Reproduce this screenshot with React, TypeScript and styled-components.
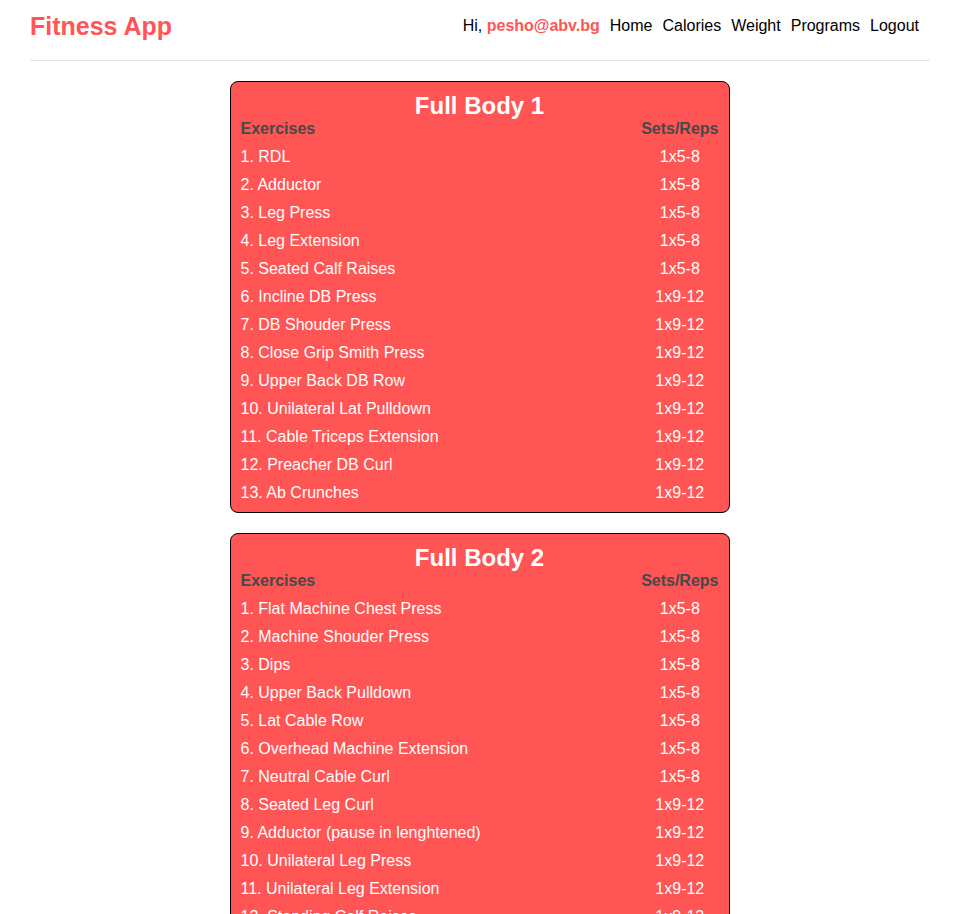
import React from "react";
import styled, { createGlobalStyle } from "styled-components";

const Global = createGlobalStyle`
  html, body { margin: 0; padding: 0; background: #fff; }
  body { font-family: "Liberation Sans", Arial, sans-serif; font-size: 16px; color: #000; }
  * { box-sizing: border-box; }
`;

const Header = styled.header`
  margin: 0 29px 0 30px;
  padding-bottom: 10px;
  border-bottom: 1px solid #e3e3e3;
`;

const HeaderRow = styled.div`
  height: 50px;
  display: flex;
  align-items: center;
  justify-content: space-between;
`;

const Brand = styled.a`
  color: #ff5555;
  font-weight: bold;
  font-size: 25px;
  text-decoration: none;
  padding-top: 2px;
`;

const Nav = styled.nav`
  display: flex;
  align-items: center;
  padding-right: 6px;
  padding-top: 2px;
`;

const NavItem = styled.a`
  color: #000;
  text-decoration: none;
  padding: 0 5px;
  font-size: 16px;
`;

const User = styled.span`
  color: #ff5555;
  font-weight: bold;
`;

const Main = styled.main`
  display: flex;
  flex-direction: column;
  align-items: center;
  gap: 20px;
  padding-top: 20px;
`;

const Card = styled.section`
  width: 500px;
  background: #ff5555;
  border: 1px solid #000;
  border-radius: 8px;
  padding: 12px 10px 5px 10px;
`;

const Title = styled.h2`
  margin: 0;
  text-align: center;
  color: #fff;
  font-size: 24px;
  line-height: 24px;
  font-weight: bold;
`;

const Table = styled.div`
  display: grid;
  grid-template-columns: 1fr auto;
  margin-top: 1px;
`;

const HeadCell = styled.div<{ $right?: boolean }>`
  color: #444a4a;
  font-weight: bold;
  font-size: 16px;
  line-height: 20px;
  padding-bottom: 4px;
  text-align: ${(p) => (p.$right ? "center" : "left")};
`;

const Cell = styled.div<{ $right?: boolean }>`
  color: #fff;
  font-size: 16px;
  height: 28px;
  line-height: 28px;
  text-align: ${(p) => (p.$right ? "center" : "left")};
`;

type Program = { title: string; items: [string, string][] };

const programs: Program[] = [
  {
    title: "Full Body 1",
    items: [
      ["1. RDL", "1x5-8"],
      ["2. Adductor", "1x5-8"],
      ["3. Leg Press", "1x5-8"],
      ["4. Leg Extension", "1x5-8"],
      ["5. Seated Calf Raises", "1x5-8"],
      ["6. Incline DB Press", "1x9-12"],
      ["7. DB Shouder Press", "1x9-12"],
      ["8. Close Grip Smith Press", "1x9-12"],
      ["9. Upper Back DB Row", "1x9-12"],
      ["10. Unilateral Lat Pulldown", "1x9-12"],
      ["11. Cable Triceps Extension", "1x9-12"],
      ["12. Preacher DB Curl", "1x9-12"],
      ["13. Ab Crunches", "1x9-12"],
    ],
  },
  {
    title: "Full Body 2",
    items: [
      ["1. Flat Machine Chest Press", "1x5-8"],
      ["2. Machine Shouder Press", "1x5-8"],
      ["3. Dips", "1x5-8"],
      ["4. Upper Back Pulldown", "1x5-8"],
      ["5. Lat Cable Row", "1x5-8"],
      ["6. Overhead Machine Extension", "1x5-8"],
      ["7. Neutral Cable Curl", "1x5-8"],
      ["8. Seated Leg Curl", "1x9-12"],
      ["9. Adductor (pause in lenghtened)", "1x9-12"],
      ["10. Unilateral Leg Press", "1x9-12"],
      ["11. Unilateral Leg Extension", "1x9-12"],
      ["12. Standing Calf Raises", "1x9-12"],
      ["13. Ab Crunches", "1x9-12"],
    ],
  },
];

export default function App() {
  return (
    <>
      <Global />
      <Header>
        <HeaderRow>
          <Brand href="#">Fitness App</Brand>
          <Nav>
            <NavItem as="span">
              Hi, <User>pesho@abv.bg</User>
            </NavItem>
            <NavItem href="#">Home</NavItem>
            <NavItem href="#">Calories</NavItem>
            <NavItem href="#">Weight</NavItem>
            <NavItem href="#">Programs</NavItem>
            <NavItem href="#">Logout</NavItem>
          </Nav>
        </HeaderRow>
      </Header>
      <Main>
        {programs.map((p) => (
          <Card key={p.title}>
            <Title>{p.title}</Title>
            <Table>
              <HeadCell>Exercises</HeadCell>
              <HeadCell $right>Sets/Reps</HeadCell>
              {p.items.map(([name, sets]) => (
                <React.Fragment key={name}>
                  <Cell>{name}</Cell>
                  <Cell $right>{sets}</Cell>
                </React.Fragment>
              ))}
            </Table>
          </Card>
        ))}
      </Main>
    </>
  );
}
